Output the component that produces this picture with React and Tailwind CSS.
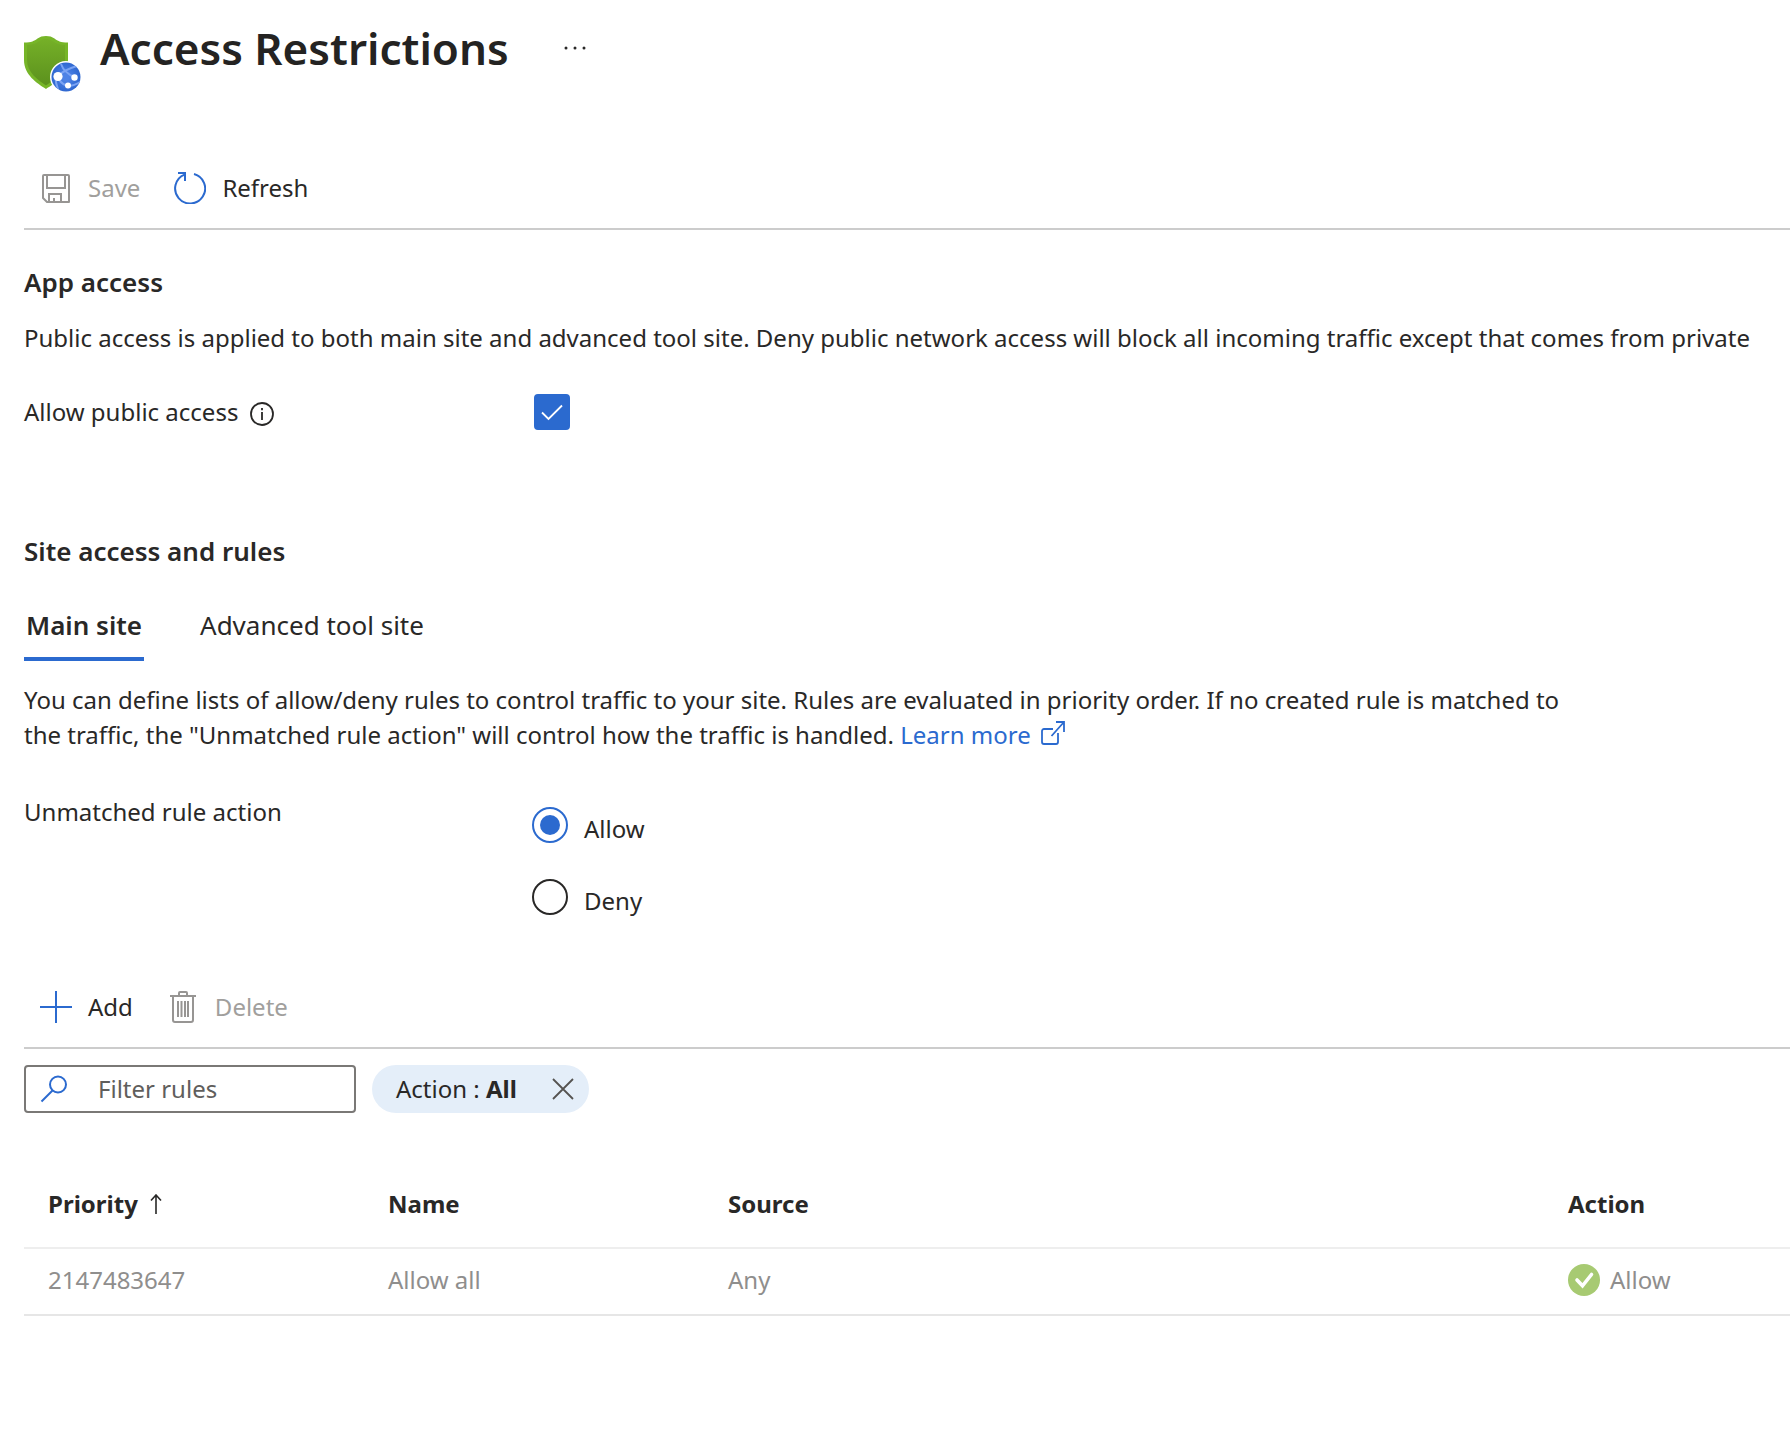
import React, { useState } from "react";

const rules = [
  { priority: "2147483647", name: "Allow all", source: "Any", action: "Allow" },
];

function ShieldIcon() {
  return (
    <svg className="mt-[21px] h-[58px] w-[58px]" viewBox="0 0 58 58" fill="none" aria-hidden="true">
      <defs>
        <linearGradient id="shield" x1="22" y1="2" x2="22" y2="52" gradientUnits="userSpaceOnUse">
          <stop stopColor="#76b128" />
          <stop offset="1" stopColor="#5b901d" />
        </linearGradient>
        <radialGradient id="globe" cx="42" cy="42" r="15" gradientUnits="userSpaceOnUse">
          <stop offset="0.2" stopColor="#4f83e6" />
          <stop offset="1" stopColor="#2d66cf" />
        </radialGradient>
        <clipPath id="globeClip">
          <circle cx="42" cy="42" r="14.5" />
        </clipPath>
      </defs>
      <path d="M0 7.500c8 0 10-1.500 13.500-4C16 1.800 18.500 1 22 1s6 .8 8.500 2.500c3.500 2.500 5.500 4 13.500 4V25c0 15-13 23-22 29C13 48 0 40 0 25z" fill="#76b528" />
      <path d="M3 10c7-.4 9.500-2 13-4.200C18 4.500 19.500 4 22 4s4 .5 6 1.800c3.500 2.200 6 3.800 13 4.200v15c0 12.500-11 20-19 25.500C14 45 3 37.500 3 25z" fill="url(#shield)" />
      <circle cx="42" cy="42" r="16" fill="#fff" />
      <circle cx="42" cy="42" r="14.500" fill="url(#globe)" />
      <g clipPath="url(#globeClip)" stroke="#7ba3f3" strokeWidth="2">
        <path d="M34 41C38 37 43 34 53 31M37 29c2 6 6 10 14 13.500M34 41c1 5 4 8 9 10M32 41c-1 4 0 8 2 13M44 51c5 0 9-2 14-5" />
      </g>
      <circle cx="34" cy="41.500" r="4.600" fill="#fff" />
      <circle cx="50.500" cy="42.500" r="3.200" fill="#fff" />
      <circle cx="44" cy="50.500" r="3" fill="#fff" />
    </svg>
  );
}

function SaveIcon() {
  return (
    <svg className="size-8" viewBox="0 0 32 32" fill="none" stroke="currentColor" strokeWidth="2" aria-hidden="true">
      <path d="M4 3h24a1 1 0 0 1 1 1v26H7l-4-4V4a1 1 0 0 1 1-1z" strokeLinejoin="round" />
      <path d="M7 3v13h18V3M9 30v-8h12v8M14 30v-4" />
    </svg>
  );
}

function RefreshIcon() {
  return (
    <svg className="size-8" viewBox="0 0 32 32" fill="none" stroke="currentColor" strokeWidth="2" aria-hidden="true">
      <path d="M20 2a15 15 0 1 1-9.500.6" />
      <path d="M4 1h7v8" />
    </svg>
  );
}

function TrashIcon() {
  return (
    <svg className="size-8" viewBox="0 0 32 32" fill="none" stroke="currentColor" strokeWidth="2" aria-hidden="true">
      <path d="M3 5h26M12 5V2a1 1 0 0 1 1-1h6a1 1 0 0 1 1 1v3M6 5v24a2 2 0 0 0 2 2h16a2 2 0 0 0 2-2V5M11 10v16M14.500 10v16M18 10v16M21 10v16" />
    </svg>
  );
}

function PlusIcon() {
  return (
    <svg className="size-8" viewBox="0 0 32 32" stroke="currentColor" strokeWidth="2" aria-hidden="true">
      <path d="M16 0v32M0 16h32" />
    </svg>
  );
}

function ToolbarButton({ icon, children, disabled }) {
  return (
    <button
      type="button"
      disabled={disabled}
      className="flex items-center gap-4 text-[#292827] disabled:text-[#a19f9d]"
    >
      <span className={disabled ? "text-[#979593]" : "text-[#2b6acf]"}>{icon}</span>
      {children}
    </button>
  );
}

export default function App() {
  const [allowPublic, setAllowPublic] = useState(true);
  const [unmatched, setUnmatched] = useState("Allow");
  const [filter, setFilter] = useState("");

  return (
    <main className="overflow-hidden bg-white pl-6 font-['Noto_Sans','Open_Sans',sans-serif] text-[24px] leading-9 text-[#292827]">
      <header className="flex items-start pt-3.5">
        <ShieldIcon />
        <h1 className="ml-[18px] text-[44px] leading-[68px] font-semibold text-[#242322]">Access Restrictions</h1>
        <button type="button" aria-label="More" className="mt-[22px] ml-[50px] p-1">
          <svg className="h-4 w-6" viewBox="0 0 24 16" fill="currentColor">
            <circle cx="3" cy="8" r="1.500" />
            <circle cx="12" cy="8" r="1.500" />
            <circle cx="21" cy="8" r="1.500" />
          </svg>
        </button>
      </header>

      {/* toolbar */}
      <div className="mt-[55px] flex h-[82px] items-center gap-[34px] border-b-2 border-[#cccccc] pl-4">
        <ToolbarButton disabled icon={<SaveIcon />}>Save</ToolbarButton>
        <ToolbarButton icon={<RefreshIcon />}>Refresh</ToolbarButton>
      </div>

      {/* app access */}
      <section className="pt-[34px]">
        <h2 className="text-[26px] font-semibold">App access</h2>
        <p className="mt-5 whitespace-nowrap">
          Public access is applied to both main site and advanced tool site. Deny public network access will block all incoming traffic except that comes from private
        </p>
        <div className="mt-[38px] flex items-center">
          <div className="flex w-[510px] items-center gap-3">
            <label htmlFor="public-access">Allow public access</label>
            <svg className="mt-1 size-6" viewBox="0 0 24 24" fill="none" stroke="currentColor" strokeWidth="1.800" aria-hidden="true">
              <circle cx="12" cy="12" r="11" />
              <path d="M12 10v8M12 6v2.200" />
            </svg>
          </div>
          <div className="relative size-9">
            <input
              id="public-access"
              type="checkbox"
              checked={allowPublic}
              onChange={(e) => setAllowPublic(e.target.checked)}
              className="block size-9 appearance-none rounded-sm border-2 border-[#292827] checked:border-[#2b6acf] checked:bg-[#2b6acf]"
            />
            {allowPublic && (
              <svg className="pointer-events-none absolute inset-0 size-9" viewBox="0 0 36 36" fill="none" stroke="#fff" strokeWidth="1.800">
                <path d="m8 18.500 6.500 6.500L28 11.500" />
              </svg>
            )}
          </div>
        </div>
      </section>

      {/* site access */}
      <section className="pt-[103px]">
        <h2 className="text-[26px] font-semibold">Site access and rules</h2>
        <div role="tablist" className="mt-[38px] flex gap-[54px] text-[26px]">
          <button type="button" role="tab" aria-selected="true" className="border-b-4 border-[#2b6acf] px-0.5 pb-3.5 font-semibold">
            Main site
          </button>
          <button type="button" role="tab" aria-selected="false" className="border-b-4 border-transparent px-0.5 pb-3.5">
            Advanced tool site
          </button>
        </div>
        <p className="mt-[21px] max-w-[1570px] leading-[35px]">
          You can define lists of allow/deny rules to control traffic to your site. Rules are evaluated in priority order. If no created rule is matched to the traffic, the "Unmatched rule action" will control how the traffic is handled.{" "}
          <a href="#learn-more" className="inline-flex items-center gap-2.5 text-[#2b6acf]">
            Learn more
            <svg className="mb-1 size-6" viewBox="0 0 24 24" fill="none" stroke="currentColor" strokeWidth="1.800" aria-hidden="true">
              <path d="M12 8H3a2 2 0 0 0-2 2v11a2 2 0 0 0 2 2h12a2 2 0 0 0 2-2v-9M15 1h8v10M23 1 10.500 15" />
            </svg>
          </a>
        </p>

        <fieldset className="mt-[42px] flex">
          <legend className="float-left w-[508px]">Unmatched rule action</legend>
          <div className="flex flex-col gap-9 pt-[13px]">
            {["Allow", "Deny"].map((option) => (
              <label key={option} className="flex h-9 items-start gap-4">
                <input
                  type="radio"
                  name="unmatched"
                  checked={unmatched === option}
                  onChange={() => setUnmatched(option)}
                  className="grid size-9 appearance-none place-content-center rounded-full border-2 border-[#292827] checked:border-[#2b6acf] checked:before:size-5 checked:before:rounded-full checked:before:bg-[#2b6acf] checked:before:content-['']"
                />
                <span className="pt-1">{option}</span>
              </label>
            ))}
          </div>
        </fieldset>
      </section>

      {/* rules toolbar */}
      <div className="mt-[52px] flex h-[82px] items-center gap-[34px] border-b-2 border-[#cccccc] pl-4">
        <ToolbarButton icon={<PlusIcon />}>Add</ToolbarButton>
        <ToolbarButton disabled icon={<TrashIcon />}>Delete</ToolbarButton>
      </div>

      <div className="mt-4 flex gap-4">
        <label className="flex h-12 w-[332px] items-center gap-[30px] rounded-sm border-2 border-[#7a7876] px-3.5">
          <svg className="size-7 shrink-0 text-[#2b6acf]" viewBox="0 0 28 28" fill="none" stroke="currentColor" strokeWidth="2" aria-hidden="true">
            <circle cx="18" cy="9.500" r="8" />
            <path d="M12.500 15.500 1.500 26.500" />
          </svg>
          <input
            type="text"
            aria-label="Filter rules"
            placeholder="Filter rules"
            value={filter}
            onChange={(e) => setFilter(e.target.value)}
            className="w-full min-w-0 outline-none placeholder:text-[#605e5c]"
          />
        </label>
        <button type="button" className="flex h-12 items-center gap-[34px] rounded-full bg-[#e4eef9] pr-3.5 pl-6">
          <span>Action : <b>All</b></span>
          <svg className="size-6" viewBox="0 0 24 24" stroke="#555351" strokeWidth="1.800" aria-hidden="true">
            <path d="m2 2 20 20M22 2 2 22" />
          </svg>
        </button>
      </div>

      <table className="mt-12 w-full table-fixed text-left">
        <thead>
          <tr className="h-[87px] border-b-2 border-[#eeeeee]">
            <th className="w-[340px] pl-6">
              <span className="flex items-center gap-3">
                Priority
                <svg className="h-5 w-3" viewBox="0 0 12 20" fill="none" stroke="currentColor" strokeWidth="1.600" aria-hidden="true">
                  <path d="M6 20V1M1 6.500 6 1l5 5.500" />
                </svg>
              </span>
            </th>
            <th className="w-[340px] pl-6">Name</th>
            <th className="pl-6">Source</th>
            <th className="w-[246px] pl-6">Action</th>
          </tr>
        </thead>
        <tbody className="text-[#8f8e8d]">
          {rules.map((rule) => (
            <tr key={rule.priority} className="h-[67px] border-b-2 border-[#e6e6e6]">
              <td className="pb-1 pl-6">{rule.priority}</td>
              <td className="pb-1 pl-6">{rule.name}</td>
              <td className="pb-1 pl-6">{rule.source}</td>
              <td className="pb-1 pl-6">
                <span className="flex items-center gap-2.5">
                  <svg className="size-8" viewBox="0 0 32 32" fill="none" aria-hidden="true">
                    <circle cx="16" cy="16" r="16" fill="#a7ca72" />
                    <path d="m9 16 5.500 5.800L23.500 10.500" stroke="#fff" strokeWidth="3.600" strokeLinecap="round" />
                  </svg>
                  {rule.action}
                </span>
              </td>
            </tr>
          ))}
        </tbody>
      </table>
    </main>
  );
}
